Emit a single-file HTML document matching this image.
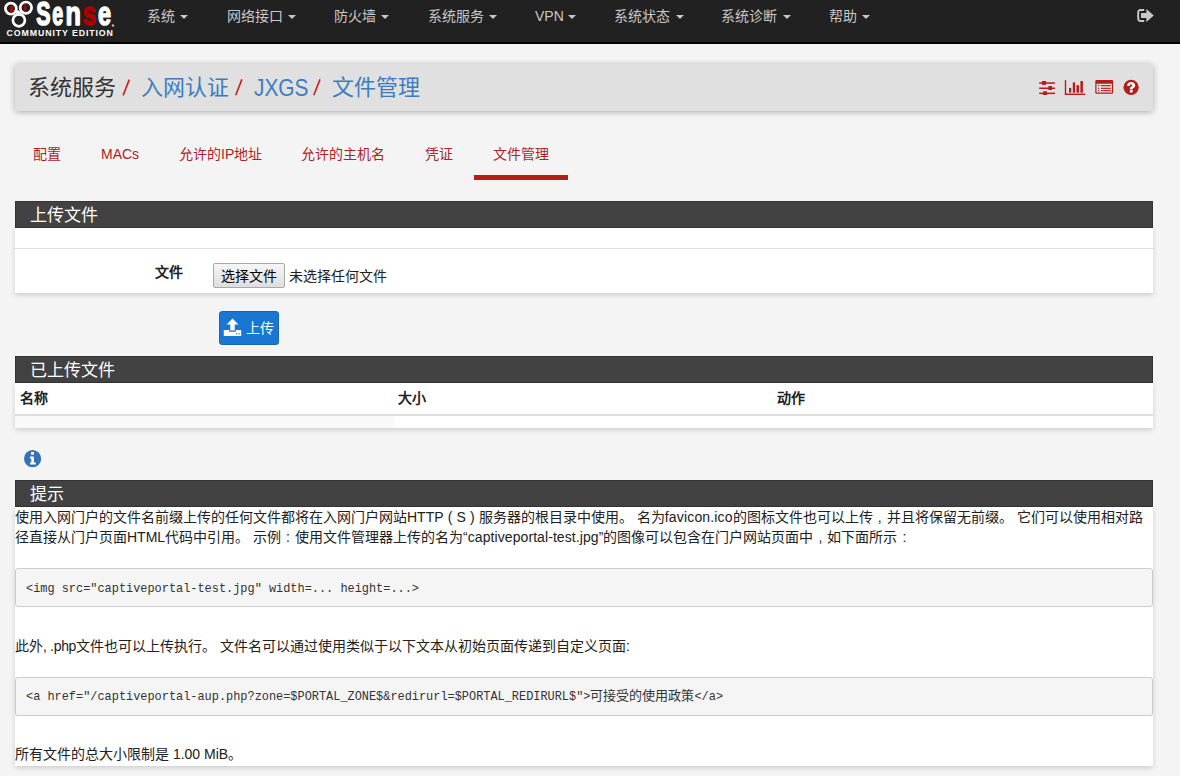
<!DOCTYPE html>
<html lang="zh-CN"><head><meta charset="utf-8">
<style>
*{box-sizing:border-box;margin:0;padding:0}
html,body{width:1180px;height:776px;overflow:hidden}
body{background:#f4f4f4;font-family:"Liberation Sans",sans-serif;font-size:14px;font-weight:300;color:#212121;position:relative}
.a{position:absolute;white-space:nowrap;line-height:1}
#nav{position:absolute;left:0;top:0;width:1180px;height:44px;background:#212121;border-bottom:2px solid #000}
.nv{position:absolute;top:8px;color:#c8c8c8;font-size:14px;white-space:nowrap;line-height:16px}
.caret{position:absolute;top:15px;width:0;height:0;border-top:4px solid #c8c8c8;border-left:4px solid transparent;border-right:4px solid transparent}
#hdr{position:absolute;left:15px;top:64px;width:1138px;height:47px;background:#e0e0e0;border-radius:3px;box-shadow:0 1px 6px rgba(0,0,0,.3)}
.bc{position:absolute;top:76px;font-size:22px;font-weight:300;color:#333;white-space:nowrap;line-height:24px}
.bl{color:#3b7dc0}
.bs{color:#b71c1c}
.tab{position:absolute;top:146px;font-size:14px;color:#b0231f;white-space:nowrap;line-height:16px}
.ph{position:absolute;left:15px;width:1138px;background:#424242;border:1px solid #343434}
.pt{position:absolute;left:30px;margin-top:1px;color:#fff;font-size:17px;white-space:nowrap;line-height:18px}
.pb{position:absolute;left:15px;width:1138px;background:#fff;box-shadow:0 2px 5px rgba(0,0,0,.16)}
.pre{position:absolute;left:15px;width:1138px;height:39px;background:#f5f5f5;border:1px solid #ccc;border-radius:3px}
.code{position:absolute;left:26px;font-family:"Liberation Mono",monospace;font-size:11.92px;color:#333;white-space:nowrap;line-height:14px}
.fw{display:inline-block;width:14px;text-align:center}
.tx{position:absolute;left:15px;font-size:14px;color:#212121;white-space:nowrap;line-height:16px}
</style></head><body>
<div id="nav">
  <svg style="position:absolute;left:0;top:0" width="120" height="42" viewBox="0 0 120 42">
    <g fill="none" stroke="#fff" stroke-width="2.7">
      <circle cx="10.9" cy="8.6" r="5.5"/>
      <circle cx="25.9" cy="7.7" r="5.7"/>
      <circle cx="18.9" cy="20.3" r="6"/>
    </g>
    <path d="M15 12L19 16L22 13L18 10Z" fill="#fff"/>
    <path d="M9.8 6H13.8V11.5L12 12.8H9.8Z" fill="#a00"/>
    <rect x="24" y="4" width="2.2" height="7.6" fill="#a00"/>
    <g font-family="Liberation Sans" font-weight="bold" stroke-linejoin="round">
      <text transform="translate(36.2,25) scale(0.64,0.98)" font-size="33.5" fill="#fff" stroke="#fff" stroke-width="1.6">S</text>
      <text transform="translate(52.2,25) scale(0.58,0.97)" font-size="34" fill="#fff" stroke="#fff" stroke-width="1.6">e</text>
      <text transform="translate(65.6,25) scale(0.74,0.97)" font-size="34" fill="#fff" stroke="#fff" stroke-width="1.6">n</text>
      <text transform="translate(82.6,25) scale(0.73,1.0)" font-size="34" fill="#a00" stroke="#a00" stroke-width="1.6">s</text>
      <text transform="translate(98,25) scale(0.69,0.97)" font-size="34" fill="#fff" stroke="#fff" stroke-width="1.6">e</text>
    </g>
    <circle cx="113" cy="25.5" r="1.2" fill="#bbb"/>
    <text x="6.6" y="35.9" font-family="Liberation Sans" font-weight="bold" font-size="8.8" fill="#fff" textLength="106.3" lengthAdjust="spacing">COMMUNITY EDITION</text>
  </svg>
  <div class="nv" style="left:147px">系统</div><div class="caret" style="left:180px"></div>
  <div class="nv" style="left:227px">网络接口</div><div class="caret" style="left:288px"></div>
  <div class="nv" style="left:334px">防火墙</div><div class="caret" style="left:381px"></div>
  <div class="nv" style="left:428px">系统服务</div><div class="caret" style="left:489px"></div>
  <div class="nv" style="left:535px">VPN</div><div class="caret" style="left:568px"></div>
  <div class="nv" style="left:614px">系统状态</div><div class="caret" style="left:676px"></div>
  <div class="nv" style="left:721px">系统诊断</div><div class="caret" style="left:783px"></div>
  <div class="nv" style="left:829px">帮助</div><div class="caret" style="left:862px"></div>
  <svg style="position:absolute;left:1137px;top:8px" width="18" height="16" viewBox="0 0 18 16">
    <path d="M7.2 2H3.4A2.2 2.2 0 0 0 1.2 4.2V10.7A2.2 2.2 0 0 0 3.4 12.9H7.2" fill="none" stroke="#c8c8c8" stroke-width="2"/>
    <path d="M4 5.1H9.4V1L16.8 7.5L9.4 13.9V9.9H4Z" fill="#c8c8c8"/>
  </svg>
</div>

<div id="hdr"></div>
<div class="bc" style="left:28px">系统服务</div>
<div class="bc bl" style="left:141px">入网认证</div>
<div class="bc bl" style="left:254px;font-size:23.2px;transform:scaleX(0.9);transform-origin:0 0;top:75.5px">JXGS</div>
<svg style="position:absolute;left:0;top:0" width="340" height="110"><g stroke="#c62828" stroke-width="1.7"><line x1="123.1" y1="95.4" x2="129.3" y2="79.6"/><line x1="235.7" y1="95.2" x2="241.9" y2="79.4"/><line x1="313.8" y1="95.2" x2="320" y2="79.4"/></g></svg>
<div class="bc bl" style="left:332px">文件管理</div>

<svg style="position:absolute;left:1039px;top:79px" width="102" height="17" viewBox="0 0 102 17">
  <g fill="#b71c1c">
    <!-- sliders -->
    <rect x="0.2" y="3.3" width="15.8" height="1.5"/>
    <rect x="0.2" y="8.5" width="15.8" height="1.5"/>
    <rect x="0.2" y="13.6" width="15.8" height="1.5"/>
    <rect x="3" y="2" width="4.1" height="3.9"/>
    <rect x="9.4" y="7" width="3.6" height="4"/>
    <rect x="4.1" y="12.3" width="3.9" height="3.7"/>
    <!-- bar chart -->
    <rect x="25.8" y="1.1" width="1.4" height="14.7"/>
    <rect x="25.8" y="14.6" width="20.4" height="1.4"/>
    <rect x="30" y="8.9" width="2.2" height="4.8"/>
    <rect x="33.8" y="3.4" width="2.3" height="10.3"/>
    <rect x="37.5" y="6.2" width="2.5" height="7.5"/>
    <rect x="41.4" y="2" width="2.5" height="11.7"/>
    <!-- list alt -->
    <path d="M57.3 1H73.1A1 1 0 0 1 74.1 2V13.8A1 1 0 0 1 73.1 14.8H57.3A1 1 0 0 1 56.3 13.8V2A1 1 0 0 1 57.3 1Z M57.5 4.7V13.6H72.9V4.7Z" fill-rule="evenodd"/>
    <rect x="59" y="6.1" width="1.2" height="1.1"/>
    <rect x="59" y="8.8" width="1.2" height="1.1"/>
    <rect x="59" y="11.1" width="1.2" height="1.1"/>
    <rect x="62" y="6.1" width="9.8" height="1.1"/>
    <rect x="62" y="8.8" width="9.8" height="1.1"/>
    <rect x="62" y="11.1" width="9.8" height="1.1"/>
  </g>
  <circle cx="92.1" cy="8.35" r="7.65" fill="#b71c1c"/>
  <path d="M88 6.8C88 4.5 89.9 3 92.1 3C94.4 3 96.2 4.4 96.2 6.5C96.2 8.8 93.6 9 93.6 10.2H90.9C90.9 7.6 93.4 7.6 93.4 6.6C93.4 6.1 92.9 5.6 92.1 5.6C91.3 5.6 90.8 6.1 90.8 6.9Z" fill="#fff"/>
  <rect x="90.9" y="10.8" width="2.7" height="2.7" fill="#fff"/>
</svg>

<div class="tab" style="left:33px">配置</div>
<div class="tab" style="left:101px">MACs</div>
<div class="tab" style="left:179px">允许的IP地址</div>
<div class="tab" style="left:301px">允许的主机名</div>
<div class="tab" style="left:425px">凭证</div>
<div class="tab" style="left:493px">文件管理</div>
<div style="position:absolute;left:474px;top:175px;width:94px;height:5px;background:#b71c1c"></div>

<!-- panel 1 -->
<div class="ph" style="top:201px;height:27px"></div>
<div class="pt" style="top:206px">上传文件</div>
<div class="pb" style="top:228px;height:65px"></div>
<div style="position:absolute;left:15px;top:248px;width:1138px;height:1px;background:#e0e0e0"></div>
<div class="a" style="left:155px;top:264px;font-weight:bold;font-size:14px;line-height:16px">文件</div>
<div style="position:absolute;left:213px;top:263px;width:72px;height:25px;border:1px solid #a9a9a9;border-radius:2px;background:linear-gradient(#f6f6f6,#dedede)"></div>
<div class="a" style="left:221px;top:268px;font-size:14px;line-height:16px;color:#000">选择文件</div>
<div class="a" style="left:289px;top:268px;font-size:14px;line-height:16px;color:#212121">未选择任何文件</div>

<div style="position:absolute;left:219px;top:311px;width:60px;height:34px;background:#1976d2;border:1px solid #1866b8;border-radius:3px"></div>
<svg style="position:absolute;left:223px;top:318px" width="19" height="19" viewBox="0 0 19 19">
  <path d="M9.5 0.5L15.5 6.5H11.7V12.5H7.3V6.5H3.5Z" fill="#fff"/>
  <path d="M0.8 12H6.2V13.8H12.8V12H18.2V18H0.8Z" fill="#fff"/>
  <rect x="13" y="15.2" width="1.2" height="1.2" fill="#1976d2"/>
  <rect x="15.5" y="15.2" width="1.2" height="1.2" fill="#1976d2"/>
</svg>
<div class="a" style="left:246px;top:320px;font-size:14px;line-height:16px;color:#fff">上传</div>

<!-- panel 2 -->
<div class="ph" style="top:356px;height:27px"></div>
<div class="pt" style="top:361px">已上传文件</div>
<div class="pb" style="top:383px;height:45px"></div>
<div class="a" style="left:20px;top:390px;font-weight:bold;font-size:14px;line-height:16px">名称</div>
<div class="a" style="left:398px;top:390px;font-weight:bold;font-size:14px;line-height:16px">大小</div>
<div class="a" style="left:777px;top:390px;font-weight:bold;font-size:14px;line-height:16px">动作</div>
<div style="position:absolute;left:15px;top:414px;width:1138px;height:2px;background:#ddd"></div>
<div style="position:absolute;left:15px;top:416px;width:379px;height:12px;background:#f9f9f9"></div>

<svg style="position:absolute;left:24px;top:450px" width="18" height="18" viewBox="0 0 18 18">
  <circle cx="8.6" cy="8.7" r="8.6" fill="#3572b5"/>
  <rect x="7" y="2" width="2.9" height="2.7" fill="#fff"/>
  <path d="M6 6.4H9.9V12.6H11.8V14.5H6V12.6H7.3V8.4H6Z" fill="#fff"/>
</svg>

<!-- panel 3 -->
<div class="ph" style="top:480px;height:27px"></div>
<div class="pt" style="top:485px">提示</div>
<div class="pb" style="top:507px;height:259px"></div>
<div class="tx" style="top:509px">使用入网门户的文件名前缀上传的任何文件都将在入网门户网站HTTP<span class="fw" style="width:13px">(</span>S<span class="fw" style="width:13px">)</span>服务器的根目录中使用。 名为<span style="letter-spacing:0.16px">favicon.ico</span>的图标文件也可以上传<span class="fw">,</span>并且将保留无前缀。 它们可以使用相对路</div>
<div class="tx" style="top:529px">径直接从门户页面HTML代码中引用。 示例<span class="fw">:</span>使用文件管理器上传的名为<span style="letter-spacing:0.08px">“captiveportal-test.jpg”</span>的图像可以包含在门户网站页面中<span class="fw">,</span>如下面所示<span class="fw">:</span></div>
<div class="pre" style="top:568px"></div>
<div class="code" style="top:582px">&lt;img src="captiveportal-test.jpg" width=... height=...&gt;</div>
<div class="tx" style="top:638px">此外<span style="letter-spacing:-0.33px">, .php</span>文件也可以上传执行。 文件名可以通过使用类似于以下文本从初始页面传递到自定义页面:</div>
<div class="pre" style="top:677px"></div>
<div class="code" style="top:690px">&lt;a href="/captiveportal-aup.php?zone=$PORTAL_ZONE$&amp;redirurl=$PORTAL_REDIRURL$"&gt;<span style="font-size:13px">可接受的使用政策</span>&lt;/a&gt;</div>
<div class="tx" style="top:746px">所有文件的总大小限制是 1.00 MiB。</div>
</body></html>
